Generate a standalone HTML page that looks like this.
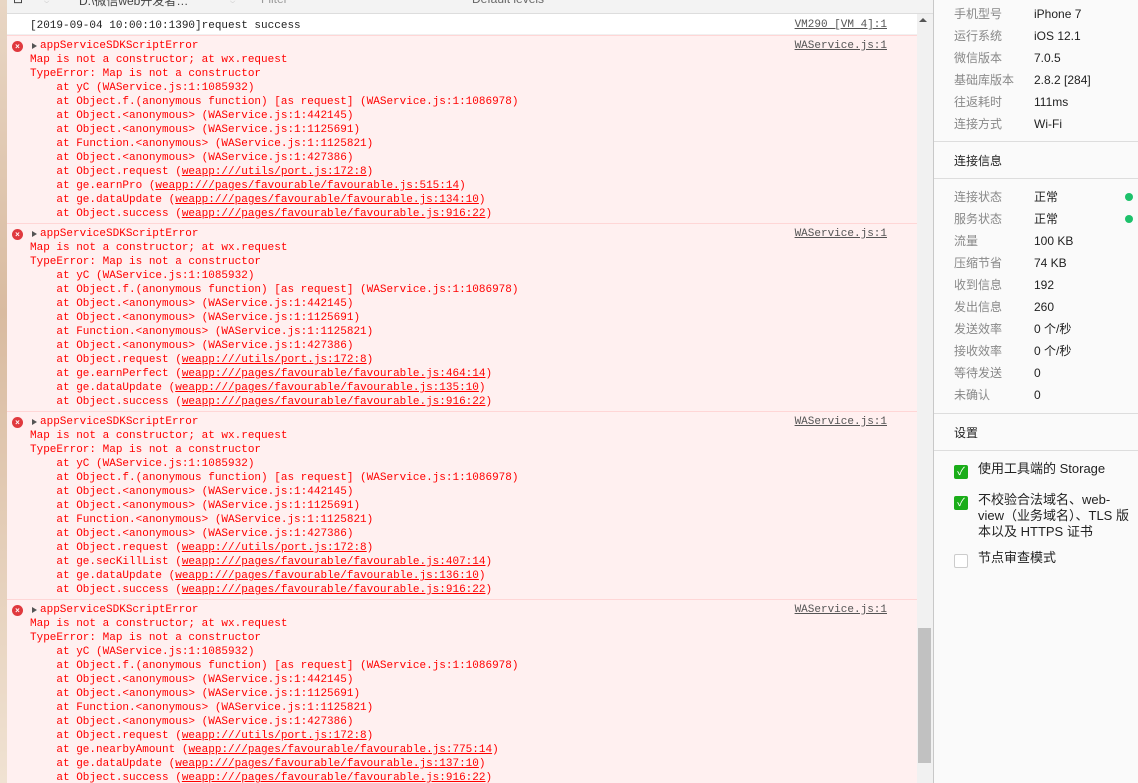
<!DOCTYPE html>
<html><head><meta charset="utf-8"><style>
*{margin:0;padding:0;box-sizing:border-box}
body{width:1138px;height:783px;overflow:hidden;position:relative;background:#fafafa;font-family:"Liberation Sans","Noto Sans CJK SC",sans-serif}
.strip{position:absolute;left:0;top:0;width:7px;height:783px;background:linear-gradient(#e8d6c4,#d9bba0 40%,#f0e2d2)}
.tb{position:absolute;left:7px;top:0;width:926px;height:14px;background:#f3f3f3;border-bottom:1px solid #ddd;overflow:hidden}
.tb span{position:absolute;top:-8px;font-size:12px;color:#333}
.con{position:absolute;left:7px;top:14px;width:910px;height:769px;background:#fff;overflow:hidden;font-family:"Liberation Mono",monospace;font-size:11px;line-height:14px}
.row{position:relative;padding:5px 0 1px 23px;color:#222;height:21px;border-bottom:1px solid #f0f0f0}
.err{position:relative;background:#fff0f0;border-top:1px solid #ffd6d6;color:#f00;padding:3px 0 4px 23px;height:188px;white-space:pre}
.lnk{position:absolute;right:30px;top:3px;color:#555;text-decoration:underline}
.row .lnk{top:4px}
.ic{position:absolute;left:5px;top:5px;width:11px;height:11px;border-radius:50%;background:#e0393e;color:#fff;font:bold 8px/11px "Liberation Sans",sans-serif;text-align:center}
.tri{position:absolute;left:25px;top:7px;width:0;height:0;border-left:5px solid #555;border-top:3.5px solid transparent;border-bottom:3.5px solid transparent}
.sp{display:inline-block;width:10px}
.u{text-decoration:underline}
.sb{position:absolute;left:917px;top:14px;width:16px;height:769px;background:#f1f1f1}
.thumb{position:absolute;left:918px;top:628px;width:13px;height:135px;background:#c1c1c1}
.vl{position:absolute;left:933px;top:0;width:1px;height:783px;background:#c8c8c8}
.rp{position:absolute;left:934px;top:0;width:204px;height:783px;font-size:12px}
.kv{position:absolute;left:20px;height:22px;line-height:22px;color:#888;width:184px}
.kv b{font-weight:normal;color:#222;position:absolute;left:80px}
.dot{position:absolute;left:171px;top:7px;width:8px;height:8px;border-radius:50%;background:#1dc16b}
.hr{position:absolute;left:0;width:204px;height:1px;background:#ddd}
.h{position:absolute;left:20px;color:#222;font-size:12px}
.cb{position:absolute;left:20px;width:14px;height:14px;border-radius:2px;background:#1aad19;color:#fff;font-size:11px;line-height:14px;text-align:center}
.cb.o{background:#fff;border:1px solid #ccc}
.ct{position:absolute;left:44px;color:#222;font-size:13px;line-height:16px;width:156px}
</style></head><body>
<div class="strip"></div>
<div class="tb"><span style="left:6px">⊡</span><span style="left:36px">◔</span><span style="left:72px;color:#444">D:\微信web开发者…</span><span style="left:222px">◔</span><span style="left:254px;color:#999">Filter</span><span style="left:465px;color:#666">Default levels</span></div>
<div class="con">
<div class="row">[2019-09-04 10:00:10:1390]request success<span class="lnk">VM290 [VM 4]:1</span></div>
<div class="err"><span class="ic">×</span><span class="tri"></span><span class="lnk">WAService.js:1</span><span class="sp"></span>appServiceSDKScriptError
Map is not a constructor; at wx.request
TypeError: Map is not a constructor
    at yC (WAService.js:1:1085932)
    at Object.f.(anonymous function) [as request] (WAService.js:1:1086978)
    at Object.&lt;anonymous&gt; (WAService.js:1:442145)
    at Object.&lt;anonymous&gt; (WAService.js:1:1125691)
    at Function.&lt;anonymous&gt; (WAService.js:1:1125821)
    at Object.&lt;anonymous&gt; (WAService.js:1:427386)
    at Object.request (<span class="u">weapp:///utils/port.js:172:8</span>)
    at ge.earnPro (<span class="u">weapp:///pages/favourable/favourable.js:515:14</span>)
    at ge.dataUpdate (<span class="u">weapp:///pages/favourable/favourable.js:134:10</span>)
    at Object.success (<span class="u">weapp:///pages/favourable/favourable.js:916:22</span>)</div>
<div class="err"><span class="ic">×</span><span class="tri"></span><span class="lnk">WAService.js:1</span><span class="sp"></span>appServiceSDKScriptError
Map is not a constructor; at wx.request
TypeError: Map is not a constructor
    at yC (WAService.js:1:1085932)
    at Object.f.(anonymous function) [as request] (WAService.js:1:1086978)
    at Object.&lt;anonymous&gt; (WAService.js:1:442145)
    at Object.&lt;anonymous&gt; (WAService.js:1:1125691)
    at Function.&lt;anonymous&gt; (WAService.js:1:1125821)
    at Object.&lt;anonymous&gt; (WAService.js:1:427386)
    at Object.request (<span class="u">weapp:///utils/port.js:172:8</span>)
    at ge.earnPerfect (<span class="u">weapp:///pages/favourable/favourable.js:464:14</span>)
    at ge.dataUpdate (<span class="u">weapp:///pages/favourable/favourable.js:135:10</span>)
    at Object.success (<span class="u">weapp:///pages/favourable/favourable.js:916:22</span>)</div>
<div class="err"><span class="ic">×</span><span class="tri"></span><span class="lnk">WAService.js:1</span><span class="sp"></span>appServiceSDKScriptError
Map is not a constructor; at wx.request
TypeError: Map is not a constructor
    at yC (WAService.js:1:1085932)
    at Object.f.(anonymous function) [as request] (WAService.js:1:1086978)
    at Object.&lt;anonymous&gt; (WAService.js:1:442145)
    at Object.&lt;anonymous&gt; (WAService.js:1:1125691)
    at Function.&lt;anonymous&gt; (WAService.js:1:1125821)
    at Object.&lt;anonymous&gt; (WAService.js:1:427386)
    at Object.request (<span class="u">weapp:///utils/port.js:172:8</span>)
    at ge.secKillList (<span class="u">weapp:///pages/favourable/favourable.js:407:14</span>)
    at ge.dataUpdate (<span class="u">weapp:///pages/favourable/favourable.js:136:10</span>)
    at Object.success (<span class="u">weapp:///pages/favourable/favourable.js:916:22</span>)</div>
<div class="err"><span class="ic">×</span><span class="tri"></span><span class="lnk">WAService.js:1</span><span class="sp"></span>appServiceSDKScriptError
Map is not a constructor; at wx.request
TypeError: Map is not a constructor
    at yC (WAService.js:1:1085932)
    at Object.f.(anonymous function) [as request] (WAService.js:1:1086978)
    at Object.&lt;anonymous&gt; (WAService.js:1:442145)
    at Object.&lt;anonymous&gt; (WAService.js:1:1125691)
    at Function.&lt;anonymous&gt; (WAService.js:1:1125821)
    at Object.&lt;anonymous&gt; (WAService.js:1:427386)
    at Object.request (<span class="u">weapp:///utils/port.js:172:8</span>)
    at ge.nearbyAmount (<span class="u">weapp:///pages/favourable/favourable.js:775:14</span>)
    at ge.dataUpdate (<span class="u">weapp:///pages/favourable/favourable.js:137:10</span>)
    at Object.success (<span class="u">weapp:///pages/favourable/favourable.js:916:22</span>)</div>
</div>
<div class="sb"></div><div class="thumb"></div>
<div style="position:absolute;left:919px;top:18px;width:0;height:0;border-left:4px solid transparent;border-right:4px solid transparent;border-bottom:4px solid #555"></div>
<div class="vl"></div>
<div class="rp">
<div class="kv" style="top:3px">手机型号<b>iPhone 7</b></div>
<div class="kv" style="top:25px">运行系统<b>iOS 12.1</b></div>
<div class="kv" style="top:47px">微信版本<b>7.0.5</b></div>
<div class="kv" style="top:69px">基础库版本<b>2.8.2 [284]</b></div>
<div class="kv" style="top:91px">往返耗时<b>111ms</b></div>
<div class="kv" style="top:113px">连接方式<b>Wi-Fi</b></div>
<div class="hr" style="top:141px"></div>
<div class="h" style="top:152px">连接信息</div>
<div class="hr" style="top:178px"></div>
<div class="kv" style="top:186px">连接状态<b>正常</b><i class="dot"></i></div>
<div class="kv" style="top:208px">服务状态<b>正常</b><i class="dot"></i></div>
<div class="kv" style="top:230px">流量<b>100 KB</b></div>
<div class="kv" style="top:252px">压缩节省<b>74 KB</b></div>
<div class="kv" style="top:274px">收到信息<b>192</b></div>
<div class="kv" style="top:296px">发出信息<b>260</b></div>
<div class="kv" style="top:318px">发送效率<b>0 个/秒</b></div>
<div class="kv" style="top:340px">接收效率<b>0 个/秒</b></div>
<div class="kv" style="top:362px">等待发送<b>0</b></div>
<div class="kv" style="top:384px">未确认<b>0</b></div>
<div class="hr" style="top:413px"></div>
<div class="h" style="top:424px">设置</div>
<div class="hr" style="top:450px"></div>
<div class="cb" style="top:465px">✓</div><div class="ct" style="top:461px">使用工具端的 Storage</div>
<div class="cb" style="top:496px">✓</div><div class="ct" style="top:492px">不校验合法域名、web-<br>view（业务域名）、TLS 版<br>本以及 HTTPS 证书</div>
<div class="cb o" style="top:554px"></div><div class="ct" style="top:550px">节点审查模式</div>
</div>
</body></html>
